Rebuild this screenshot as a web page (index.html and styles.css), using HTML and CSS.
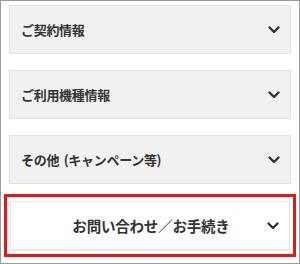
FILE: index.html
```html
<!DOCTYPE html>
<html lang="ja">
<head>
  <meta charset="UTF-8">
  <meta name="viewport" content="width=device-width, initial-scale=1.0">
  <title>メニュー</title>
  <link rel="stylesheet" href="styles.css">
</head>
<body>
  <main class="frame">
    <a href="#" class="menu-item">
      <span class="menu-label">ご契約情報</span>
      <svg class="chevron" viewBox="0 0 12 8" aria-hidden="true"><path d="M1.5 1.5 6 6l4.5-4.5"/></svg>
    </a>
    <a href="#" class="menu-item">
      <span class="menu-label">ご利用機種情報</span>
      <svg class="chevron" viewBox="0 0 12 8" aria-hidden="true"><path d="M1.5 1.5 6 6l4.5-4.5"/></svg>
    </a>
    <a href="#" class="menu-item">
      <span class="menu-label">その他 (キャンペーン等)</span>
      <svg class="chevron" viewBox="0 0 12 8" aria-hidden="true"><path d="M1.5 1.5 6 6l4.5-4.5"/></svg>
    </a>
    <div class="highlight">
      <a href="#" class="menu-item menu-item--white">
        <span class="menu-label menu-label--center">お問い合わせ／お手続き</span>
        <svg class="chevron" viewBox="0 0 12 8" aria-hidden="true"><path d="M1.5 1.5 6 6l4.5-4.5"/></svg>
      </a>
    </div>
  </main>
</body>
</html>
```

FILE: styles.css
```css
/* Reset */
*, *::before, *::after {
  box-sizing: border-box;
  margin: 0;
  padding: 0;
}

body {
  font-family: "Noto Sans CJK JP", "Noto Sans", sans-serif;
  background: #ffffff;
  color: #333333;
}

/* Outer frame */
.frame {
  width: 300px;
  height: 264px;
  border: 1px solid #9a9a9a;
  padding: 4px 8px 0;
  display: flex;
  flex-direction: column;
  gap: 16px;
}

/* Menu rows */
.menu-item {
  display: flex;
  align-items: center;
  height: 49px;
  padding: 0 10px 0 11px;
  background: #f1f1f1;
  border: 1px solid #e2e2e2;
  color: #333333;
  text-decoration: none;
}

.menu-label {
  flex: 1;
  font-size: 13px;
  font-weight: 700;
  letter-spacing: -0.3px;
  word-spacing: 2px;
}

.menu-label--center {
  text-align: center;
  font-size: 14.5px;
  letter-spacing: -0.2px;
  padding-left: 13px;
}

.chevron {
  width: 12px;
  height: 8px;
  fill: none;
  stroke: #333333;
  stroke-width: 2.4;
  stroke-linecap: round;
  stroke-linejoin: round;
}

/* Highlighted row */
.highlight {
  margin: -6px -5px 0;
  border: 3px solid #e01a1a;
  padding: 4px 3px;
}

.menu-item--white {
  background: #ffffff;
  border-color: #e6e6e6;
  box-shadow: 0 1px 1px rgba(0, 0, 0, 0.06);
}
```
